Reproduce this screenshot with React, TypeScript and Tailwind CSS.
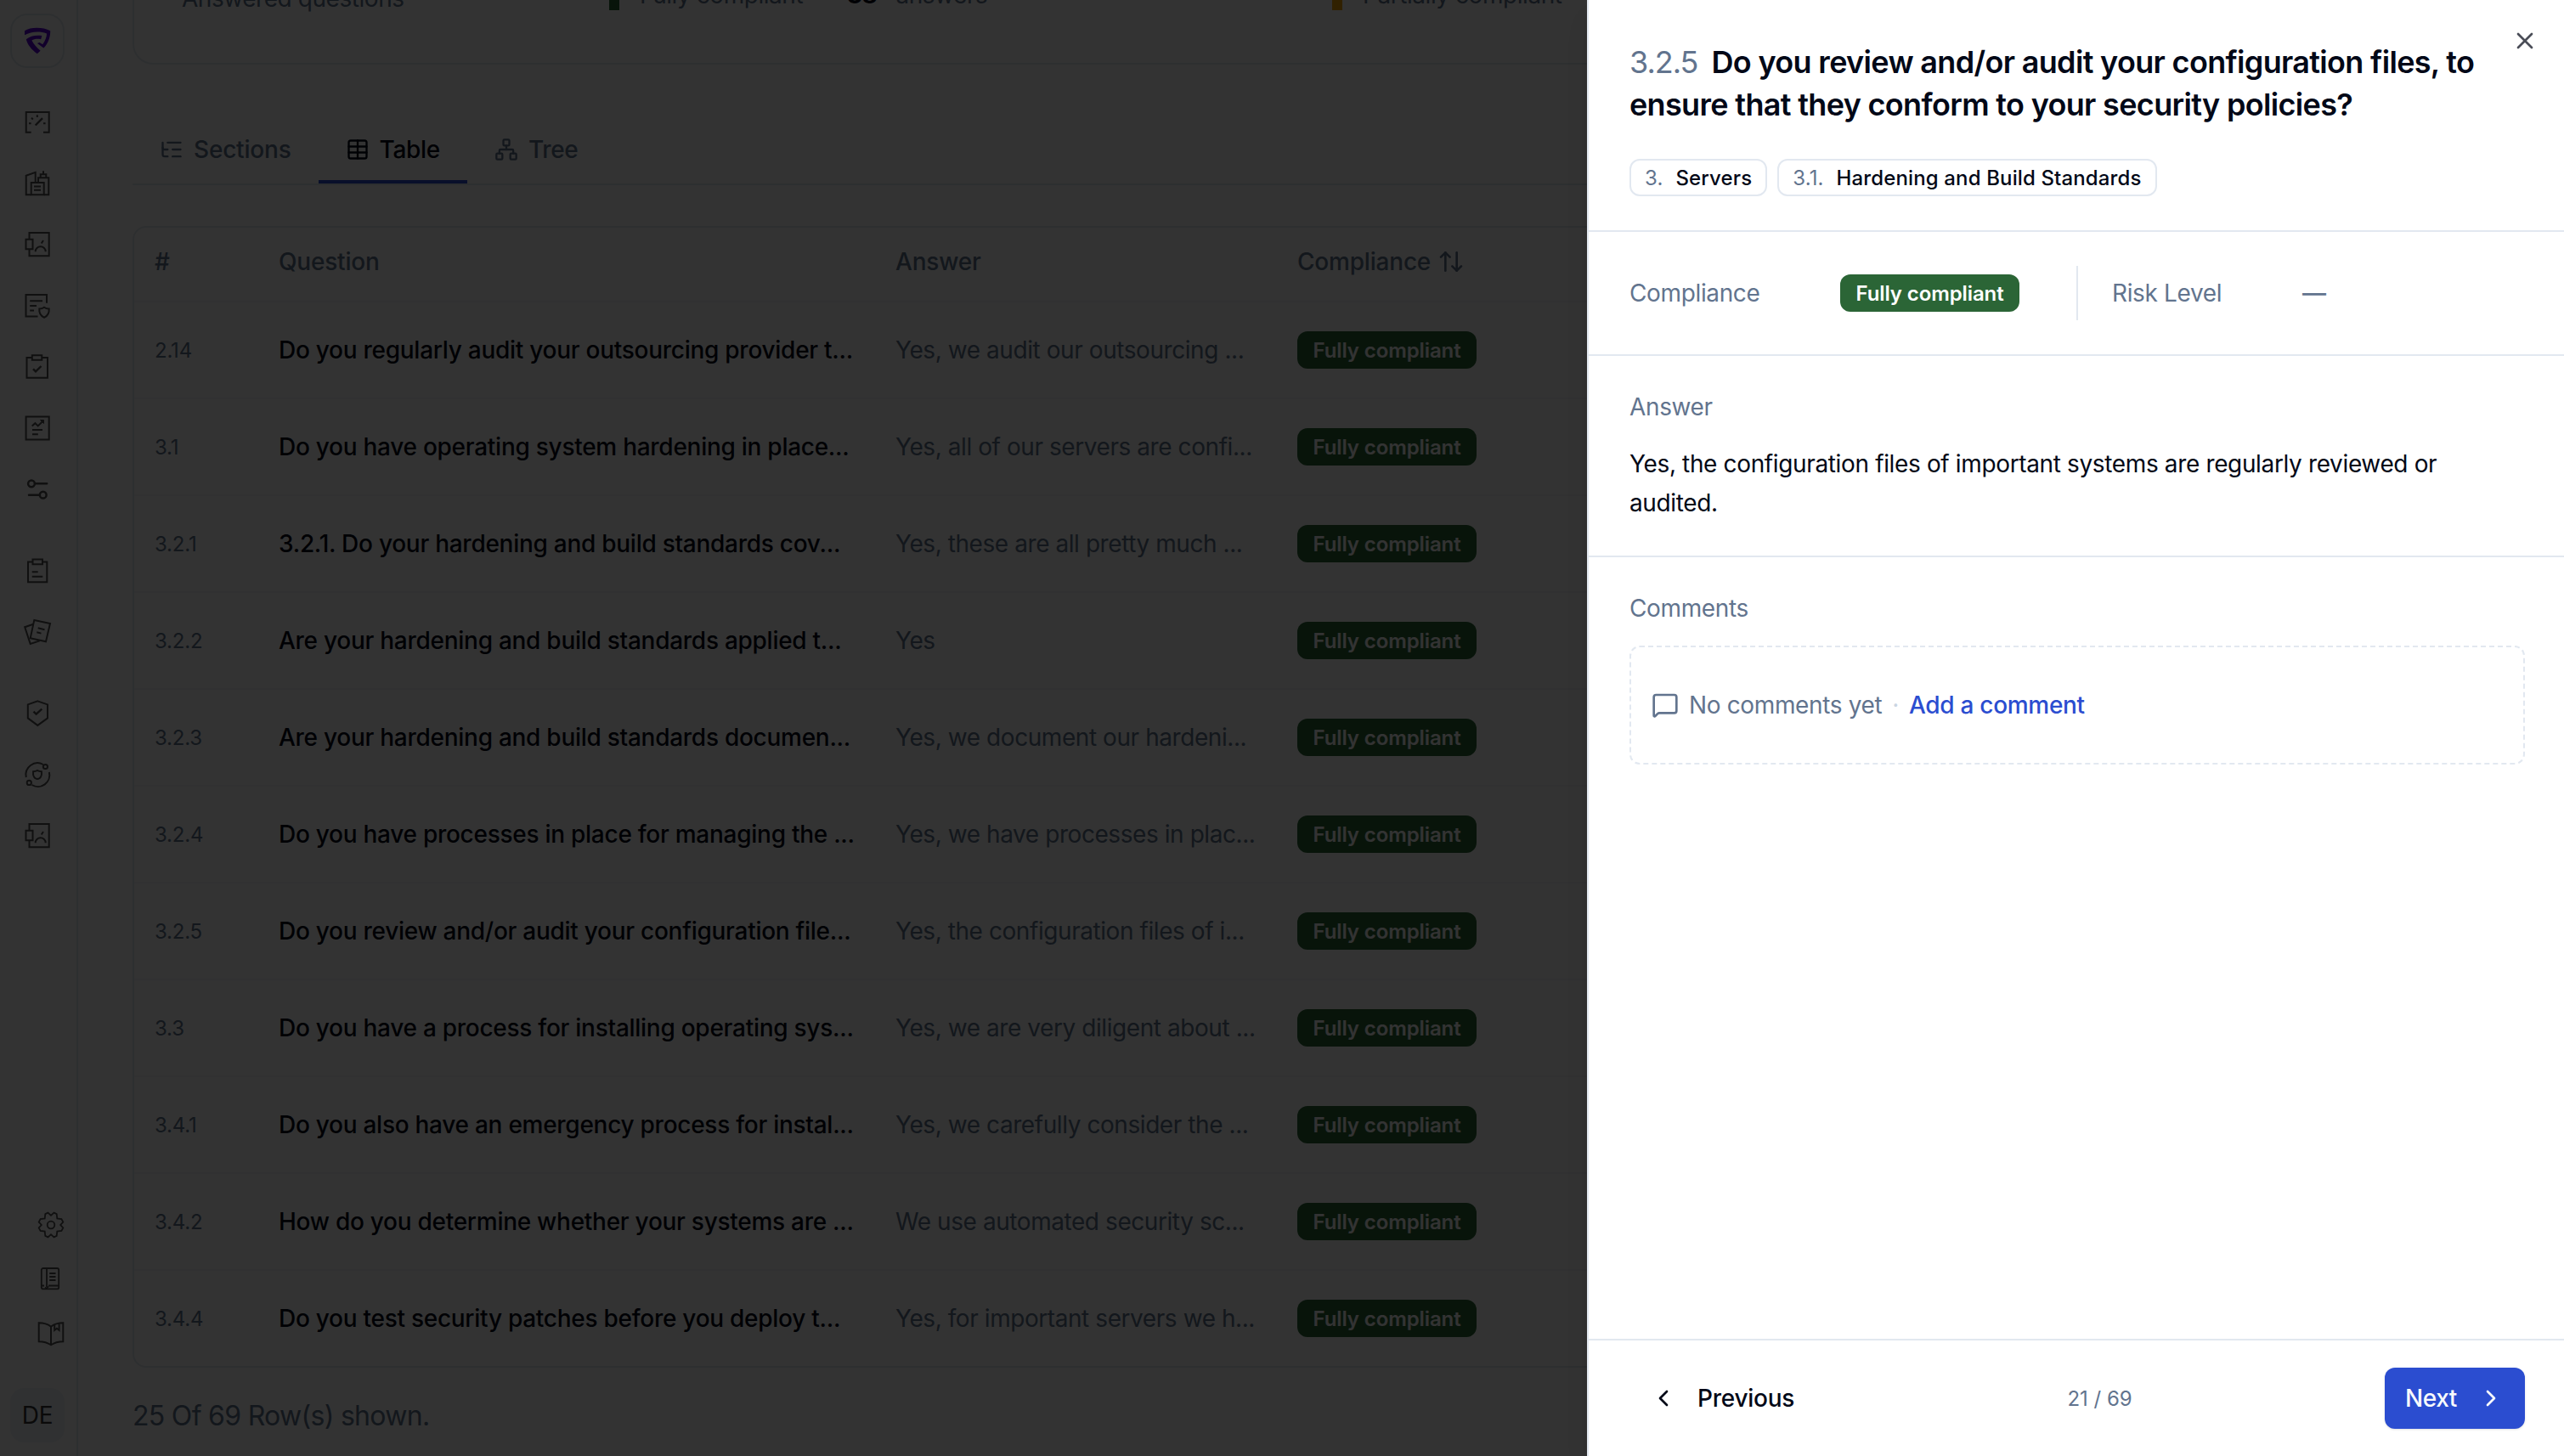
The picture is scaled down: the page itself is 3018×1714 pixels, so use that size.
import type { ReactNode } from "react";
import {
  ArrowUpDown,
  ChevronLeft,
  ChevronRight,
  ListTree,
  MessageSquare,
  Network,
  Table,
  X,
} from "lucide-react";

const rows = [
  { id: "2.14", question: "Do you regularly audit your outsourcing provider t...", answer: "Yes, we audit our outsourcing ..." },
  { id: "3.1", question: "Do you have operating system hardening in place...", answer: "Yes, all of our servers are confi..." },
  { id: "3.2.1", question: "3.2.1. Do your hardening and build standards cov...", answer: "Yes, these are all pretty much ..." },
  { id: "3.2.2", question: "Are your hardening and build standards applied t...", answer: "Yes" },
  { id: "3.2.3", question: "Are your hardening and build standards documen...", answer: "Yes, we document our hardeni..." },
  { id: "3.2.4", question: "Do you have processes in place for managing the ...", answer: "Yes, we have processes in plac..." },
  { id: "3.2.5", question: "Do you review and/or audit your configuration file...", answer: "Yes, the configuration files of i..." },
  { id: "3.3", question: "Do you have a process for installing operating sys...", answer: "Yes, we are very diligent about ..." },
  { id: "3.4.1", question: "Do you also have an emergency process for instal...", answer: "Yes, we carefully consider the ..." },
  { id: "3.4.2", question: "How do you determine whether your systems are ...", answer: "We use automated security sc..." },
  { id: "3.4.4", question: "Do you test security patches before you deploy t...", answer: "Yes, for important servers we h..." },
];

function NavIcon({ children, strokeWidth = 2 }: { children: ReactNode; strokeWidth?: number }) {
  return (
    <svg
      viewBox="0 0 32 32"
      fill="none"
      stroke="currentColor"
      strokeWidth={strokeWidth}
      className="size-8 shrink-0 overflow-visible"
    >
      {children}
    </svg>
  );
}

function AssetIcon() {
  return (
    <NavIcon>
      <path d="M6.5 9.7V2H29.7V29.3H6.5V21.3" />
      <path d="M2.5 9.7H10.5V21.3H2.5z" />
      <path d="M13.7 24.3a6 6 0 0 1 12 0M20.7 14.5l2.3-3.5" />
    </NavIcon>
  );
}

function Logo() {
  return (
    <svg viewBox="0 0 32 32" className="size-8" fill="#5a00d6">
      <path d="M1 4.2C8 -0.2 22 -.4 31.2 4.2C31.4 12 28.4 19.5 23.3 24.6L15.9 19.1L18.5 18.1L22.2 20.2C25.3 16 27 11.5 27 7.4C18.6 4.2 8.5 4.9 1 9.3z" />
      <path d="M2.8 14.2C8 10.2 14 9.2 21.3 10.1L20.2 14.2C15.4 13.4 12.2 13.9 9.4 15.6C11.6 19.8 15 24 19.6 27.7L15.8 31.2C9.3 26.6 4.6 21 2.8 14.2z" />
    </svg>
  );
}

function Sidebar() {
  return (
    <aside className="flex h-full w-[92px] shrink-0 flex-col border-r-2 border-slate-200 py-4 text-[#505050]">
      <div className="ml-3 flex size-16 items-center justify-center rounded-[20px] border-2 border-slate-200">
        <Logo />
      </div>
      <nav className="mt-12 ml-7 flex flex-col gap-16">
        <div className="flex flex-col gap-10">
          <NavIcon>
            <path d="M8.7 27.7H2.7V4H29.7V27.7H23" />
            <path d="M13.7 19.5L22 11.2" strokeWidth="2.4" />
            <path d="M6 17.3h2.6M23 17.3h2.6M9 10.7l1.8 1.8M15.8 7.3v2.6" />
          </NavIcon>
          <NavIcon>
            <path d="M8.7 29.3H2.7V6.7L13.7 2.8V14.7M17 14.7V9.3H29.3V29.3H23.7" />
            <path d="M8.7 15H23.7V29.3H8.7zM12 19.4h8M12 23.7h8M19.7 9.3v-4h6.6v4M23 5.3V1.2" />
          </NavIcon>
          <AssetIcon />
          <NavIcon>
            <path d="M16.5 28.6H2.5V2.9H27V12.8M7.2 10.3H22M7.2 16H15M7.2 21.4H12" />
            <path d="M24 17.8c2 1.5 3.8 1.7 5.7 1.7c.4 5-1.4 8.3-5.7 10.3c-4.3-2-6.1-5.3-5.7-10.3c1.9 0 3.7-.2 5.7-1.7z" />
          </NavIcon>
          <NavIcon>
            <path d="M9.7 5H3.5V28.7H28V5H21.5" />
            <path d="M9.8 2.2H21.3V7.8H9.8z" />
            <path d="M11 18.3L14 21.3L20.5 15" strokeWidth="2.4" />
          </NavIcon>
          <NavIcon>
            <path d="M2.6 2.4H29.7V29.4H2.6z" />
            <path d="M9.7 13.6L13.4 10.2L16.7 13.4L22.5 7.7M10 18h12M10 23.2h6.8" />
            <path d="M19.5 6.5H23.5V10.5z" fill="currentColor" strokeWidth="1" />
          </NavIcon>
          <NavIcon strokeWidth={2.5}>
            <circle cx="9" cy="9.3" r="3.9" />
            <circle cx="22.7" cy="22.7" r="3.9" />
            <path d="M13 9.3H27.2M19 22.7H6" strokeLinecap="round" />
          </NavIcon>
        </div>
        <div className="flex flex-col gap-10">
          <NavIcon>
            <path d="M10.3 5.6H5V29.2H27.3V5.6H22" />
            <path d="M10.5 2.6H22V8.2H10.5zM9.7 17.2h7M9.7 22.7h12.6" />
          </NavIcon>
          <NavIcon>
            <path d="M12.3 1.9L31 5.9L26 27.2L7.7 23.3z" />
            <path d="M11.3 6.7L1.2 10.2L7.7 29.9L18.7 26.4M16.7 11.3l7.8 1.9M15.3 16.3l5.2 1.3" />
          </NavIcon>
        </div>
        <div className="flex flex-col gap-10">
          <NavIcon>
            <path d="M16.3 1.4L28 5.4V21.4L16.3 29.9L4.8 21.4V5.4z" />
            <path d="M11.5 13.6L14.6 16.7L21.3 10.6" strokeWidth="2.4" />
          </NavIcon>
          <NavIcon>
            <path d="M2.8 19A13.7 13.7 0 0 1 22.8 4M29.9 13A13.7 13.7 0 0 1 9.5 28" />
            <circle cx="25.4" cy="6.5" r="2.6" />
            <circle cx="6.3" cy="25.4" r="2.6" />
            <path d="M16 11c1.7 1 3.3 1.3 4.9 1.3c.6 4.6-1.2 8.7-4.9 8.7s-5.5-4.1-4.9-8.7c1.6 0 3.2-.3 4.9-1.3z" />
          </NavIcon>
          <AssetIcon />
        </div>
      </nav>
      <div className="mt-auto ml-11 flex flex-col gap-8">
        <NavIcon strokeWidth={1.8}>
          <path d="M16 4.8L12.5 1.6L9.3 3.2L8.7 8.5L3.6 9L1.7 12.6L4.8 16L1.7 19.4L3.6 23L8.7 23.5L9.3 28.8L12.5 30.4L16 27.2L19.5 30.4L22.7 28.8L23.3 23.5L28.4 23L30.3 19.4L27.2 16L30.3 12.6L28.4 9L23.3 8.5L22.7 3.2L19.5 1.6z" />
          <circle cx="16" cy="16" r="4.3" />
        </NavIcon>
        <NavIcon strokeWidth={1.8}>
          <rect x="4.8" y="3" width="20.4" height="24.4" rx="2" />
          <path d="M11 3V25M5 23.5H8M13 23.5H25M14.2 9H21.5M14.2 13H21.5M14.2 17H21.5M9 25.5l2 1.2l2-2.2" />
        </NavIcon>
        <NavIcon>
          <path d="M1.7 3.3C7 3.3 12 4.6 16 7.7C20 4.6 25 3.3 30.3 3.3V25.2C25 25.2 20 26.5 16 29.3C12 26.5 7 25.2 1.7 25.2zM16 7.7V29.3" />
          <path d="M20.2 5.7V12L22.9 9.8L25.6 12V4.3" />
        </NavIcon>
      </div>
      <div className="mt-12 ml-3 flex size-16 items-center justify-center rounded-2xl bg-slate-100 text-[28px] tracking-[-0.36px] text-[#333]">
        DE
      </div>
    </aside>
  );
}

function ComplianceBadge() {
  return (
    <span className="inline-flex h-11 w-[211px] items-center justify-center rounded-xl bg-[#2b6536] pt-0.5 text-[24px] font-semibold tracking-[-0.1px] whitespace-nowrap text-white">
      Fully compliant
    </span>
  );
}

function Summary() {
  return (
    <section className="flex h-[76px] items-start rounded-b-3xl border-x-2 border-b-2 border-slate-200 pl-14 text-[28px] leading-10 tracking-[-0.45px] text-slate-500">
      <p className="-mt-[22px] w-[503px]">Answered questions</p>
      <div className="-mt-[26px] flex w-[851px] items-center">
        <span className="mt-2 mr-6 h-7 w-3 bg-[#2b6536]" />
        <span className="w-[244px]">Fully compliant</span>
        <span className="mr-[22px] font-bold text-[#020817]">38</span>
        <span>answers</span>
      </div>
      <div className="-mt-[26px] flex items-center">
        <span className="mt-2 mr-6 h-7 w-3 bg-[#f5a300]" />
        <span>Partially compliant</span>
      </div>
    </section>
  );
}

function Tabs() {
  return (
    <div className="mt-[60px] flex h-[82px] border-b-2 border-slate-200 text-[28px] font-medium tracking-[-0.2px] text-slate-500">
      <button className="flex items-center gap-3 border-b-4 border-transparent px-8 pt-1">
        <ListTree size={28} />
        Sections
      </button>
      <button className="flex items-center gap-3 border-b-4 border-[#2b4dd0] px-8 pt-1 tracking-[-0.3px] text-[#020817]">
        <Table size={28} />
        Table
      </button>
      <button className="flex items-center gap-3 border-b-4 border-transparent px-8 pt-1 tracking-[-0.4px]">
        <Network size={28} />
        Tree
      </button>
    </div>
  );
}

function QuestionsTable() {
  return (
    <div className="mt-12 rounded-2xl border-2 border-slate-200 text-[28px] text-slate-500">
      <div className="grid h-[88px] grid-cols-[146px_726px_473px_1fr] items-center border-b-2 border-slate-200/40 pb-1.5 font-medium tracking-[-0.2px]">
        <span className="px-6">#</span>
        <span className="px-6">Question</span>
        <span className="px-6">Answer</span>
        <span className="flex items-center gap-2 px-6">
          Compliance
          <ArrowUpDown size={32} />
        </span>
      </div>
      {rows.map((row) => (
        <div
          key={row.id}
          className="grid h-[114px] grid-cols-[146px_726px_473px_1fr] items-center border-b-2 border-slate-200/40 last:h-28 last:border-b-0"
        >
          <span className="px-6 pt-0.5 text-[24px] tracking-[-0.2px]">{row.id}</span>
          <span className="px-6 font-medium tracking-[-0.27px] whitespace-nowrap text-[#020817]">
            {row.question}
          </span>
          <span className="px-6 tracking-[-0.43px] whitespace-nowrap">{row.answer}</span>
          <span className="flex px-6">
            <ComplianceBadge />
          </span>
        </div>
      ))}
    </div>
  );
}

function SectionChip({ index, label }: { index: string; label: string }) {
  return (
    <span className="flex h-11 items-center gap-4 rounded-xl border-2 border-slate-200 px-4 pt-0.5 text-[24px] font-medium tracking-[0.13px]">
      <span className="-mr-px font-normal text-slate-500">{index}</span>
      {label}
    </span>
  );
}

function QuestionSheet() {
  return (
    <div className="absolute inset-y-0 right-0 flex w-[1150px] flex-col border-l-2 border-slate-200 bg-white text-[28px] tracking-[-0.36px] text-[#020817] shadow-[0_20px_30px_-6px_rgb(0_0_0/0.1),0_8px_12px_-8px_rgb(0_0_0/0.1)]">
      <button className="absolute top-8 right-[30px] text-[#4a4d57]">
        <X size={32} />
      </button>
      <header className="h-[273px] border-b-2 border-slate-200 px-12 pt-12">
        <h2 className="text-[36px] leading-[50px] font-semibold tracking-[-0.67px] whitespace-nowrap">
          <span className="mr-4 font-normal tracking-[-1px] text-slate-500">3.2.5</span>
          Do you review and/or audit your configuration files, to
          <br />
          ensure that they conform to your security policies?
        </h2>
        <div className="mt-[39px] flex gap-3">
          <SectionChip index="3." label="Servers" />
          <SectionChip index="3.1." label="Hardening and Build Standards" />
        </div>
      </header>
      <section className="flex h-[146px] items-center border-b-2 border-slate-200 px-12 text-slate-500">
        <span className="w-[248px]">Compliance</span>
        <span className="flex w-[278px]">
          <ComplianceBadge />
        </span>
        <span className="mr-10 h-16 w-0.5 bg-slate-200" />
        <span className="w-[224px]">Risk Level</span>
        <span className="font-medium">—</span>
      </section>
      <section className="h-[237px] border-b-2 border-slate-200 px-12 pt-10">
        <h3 className="leading-10 text-slate-500">Answer</h3>
        <p className="mt-6 leading-[46px]">
          Yes, the configuration files of important systems are regularly reviewed or
          <br />
          audited.
        </p>
      </section>
      <section className="flex-1 px-12 pt-10">
        <h3 className="leading-10 text-slate-500">Comments</h3>
        <div className="mt-6 mr-[-2px] flex h-[140px] items-center rounded-xl border-2 border-dashed border-slate-200 px-6 text-slate-500">
          <MessageSquare size={32} className="mr-3" />
          No comments yet
          <span className="mx-3 text-slate-300">·</span>
          <button className="font-medium tracking-[-0.3px] text-[#2b4dd0]">Add a comment</button>
        </div>
      </section>
      <footer className="flex h-[138px] items-center justify-between border-t-2 border-slate-200 pr-[46px] pl-12 font-medium tracking-[-0.25px]">
        <button className="flex h-[72px] items-center gap-6 px-6">
          <ChevronLeft size={32} />
          Previous
        </button>
        <span className="pt-0.5 text-[24px] font-normal tracking-normal text-slate-500">21 / 69</span>
        <button className="flex h-[72px] items-center gap-6 rounded-xl bg-[#2b4dd0] px-6 tracking-[-0.4px] text-slate-50 shadow-sm">
          Next
          <ChevronRight size={32} />
        </button>
      </footer>
    </div>
  );
}

export default function App() {
  return (
    <div className="relative flex h-[1714px] w-[3018px] overflow-hidden bg-white font-['Inter',sans-serif] antialiased">
      <Sidebar />
      <main className="min-w-0 flex-1 px-16">
        <Summary />
        <Tabs />
        <QuestionsTable />
        <p className="mt-[37px] text-[32px] leading-10 tracking-[-0.7px] text-slate-500">
          25 Of 69 Row(s) shown.
        </p>
      </main>
      <div className="absolute inset-0 bg-black/80" />
      <QuestionSheet />
    </div>
  );
}
